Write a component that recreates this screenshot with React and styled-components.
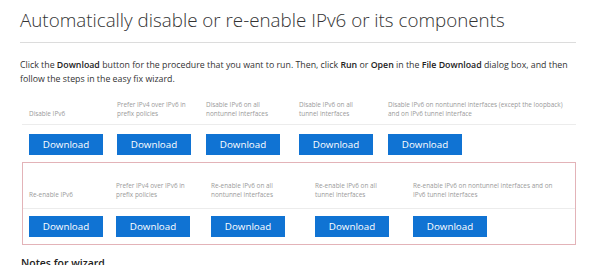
import React from "react";
import styled, { createGlobalStyle } from "styled-components";

const Global = createGlobalStyle`
  html, body { margin: 0; padding: 0; background: #ffffff; }
  body { font-family: "Open Sans", "Liberation Sans", sans-serif; color: #222; }
`;

const Page = styled.div`
  width: 614px;
  height: 265px;
  overflow: hidden;
  padding: 6px 38px 0 20px;
  box-sizing: border-box;
`;

const Title = styled.h1`
  margin: 0;
  font-family: "Open Sans", "Lato", sans-serif;
  font-weight: 300;
  font-size: 18.8px;
  line-height: 28px;
  color: #333;
`;

const Rule = styled.div`
  height: 1px;
  background: #dcdcdc;
  margin: 8px 0 0 0;
`;

const Intro = styled.p`
  margin: 15px 0 0 0;
  font-size: 8.8px;
  line-height: 14px;
  color: #333;
  b { font-weight: 600; color: #222; }
`;

const Table = styled.div`
  margin: ${(p) => p.$margin};
  margin-left: 2px;
  border: ${(p) => (p.$boxed ? "1px solid #e3b3b8" : "none")};
  padding-bottom: ${(p) => p.$padBottom}px;
`;

const Row = styled.div`
  display: grid;
  grid-template-columns: ${(p) => p.$cols};
  border-bottom: ${(p) => (p.$head ? "1px solid #ececec" : "none")};
  padding: ${(p) => p.$pad};
  align-items: end;
`;

const HeadCell = styled.div`
  padding: 0 8px 0 ${(p) => p.$left}px;
  font-size: 6.4px;
  line-height: 9px;
  color: #9a9a9a;
  white-space: pre-line;
`;

const Cell = styled.div`
  padding: 0 0 0 ${(p) => p.$left}px;
`;

const Button = styled.button`
  width: 74px;
  height: 21px;
  border: none;
  background: #1073d3;
  color: #ffffff;
  font-family: "Open Sans", "Liberation Sans", sans-serif;
  font-size: 9.8px;
  padding: 0;
  display: flex;
  align-items: center;
  justify-content: center;
  cursor: pointer;
`;

const Notes = styled.h3`
  margin: 11px 0 0 1px;
  font-size: 10.5px;
  font-weight: 600;
  color: #222;
  line-height: 14px;
`;

const top = [
  "Disable IPv6",
  "Prefer IPv4 over IPv6 in\nprefix policies",
  "Disable IPv6 on all\nnontunnel interfaces",
  "Disable IPv6 on all\ntunnel interfaces",
  "Disable IPv6 on nontunnel interfaces (except the loopback)\nand on IPv6 tunnel interface",
];

const bottom = [
  "Re-enable IPv6",
  "Prefer IPv4 over IPv6 in\nprefix policies",
  "Re-enable IPv6 on all\nnontunnel interfaces",
  "Re-enable IPv6 on all\ntunnel interfaces",
  "Re-enable IPv6 on nontunnel interfaces and on\nIPv6 tunnel interfaces",
];

function DownloadTable({ labels, cols, left, boxed, headPad, btnPad, margin, padBottom }) {
  return (
    <Table $boxed={boxed} $margin={margin} $padBottom={padBottom}>
      <Row $cols={cols} $head $pad={headPad}>
        {labels.map((l, i) => (
          <HeadCell key={i} $left={left}>{l}</HeadCell>
        ))}
      </Row>
      <Row $cols={cols} $pad={btnPad}>
        {labels.map((l, i) => (
          <Cell key={i} $left={left}>
            <Button>Download</Button>
          </Cell>
        ))}
      </Row>
    </Table>
  );
}

export default function App() {
  return (
    <>
      <Global />
      <Page>
        <Title>Automatically disable or re-enable IPv6 or its components</Title>
        <Rule />
        <Intro>
          Click the <b>Download</b> button for the procedure that you want to run. Then, click <b>Run</b> or{" "}
          <b>Open</b> in the <b>File Download</b> dialog box, and then follow the steps in the easy fix wizard.
        </Intro>
        <DownloadTable
          labels={top}
          cols="88px 89px 93px 89px 1fr"
          left={7}
          headPad="0 0 6px 0"
          btnPad="9px 0 0 0"
          margin="14px 0 0 0"
          padBottom={0}
        />
        <DownloadTable
          labels={bottom}
          cols="87px 95px 104px 98px 1fr"
          left={6}
          boxed
          headPad="18px 0 9px 0"
          btnPad="7px 0 0 0"
          margin="7px 0 0 0"
          padBottom={7}
        />
        <Notes>Notes for wizard</Notes>
      </Page>
    </>
  );
}
